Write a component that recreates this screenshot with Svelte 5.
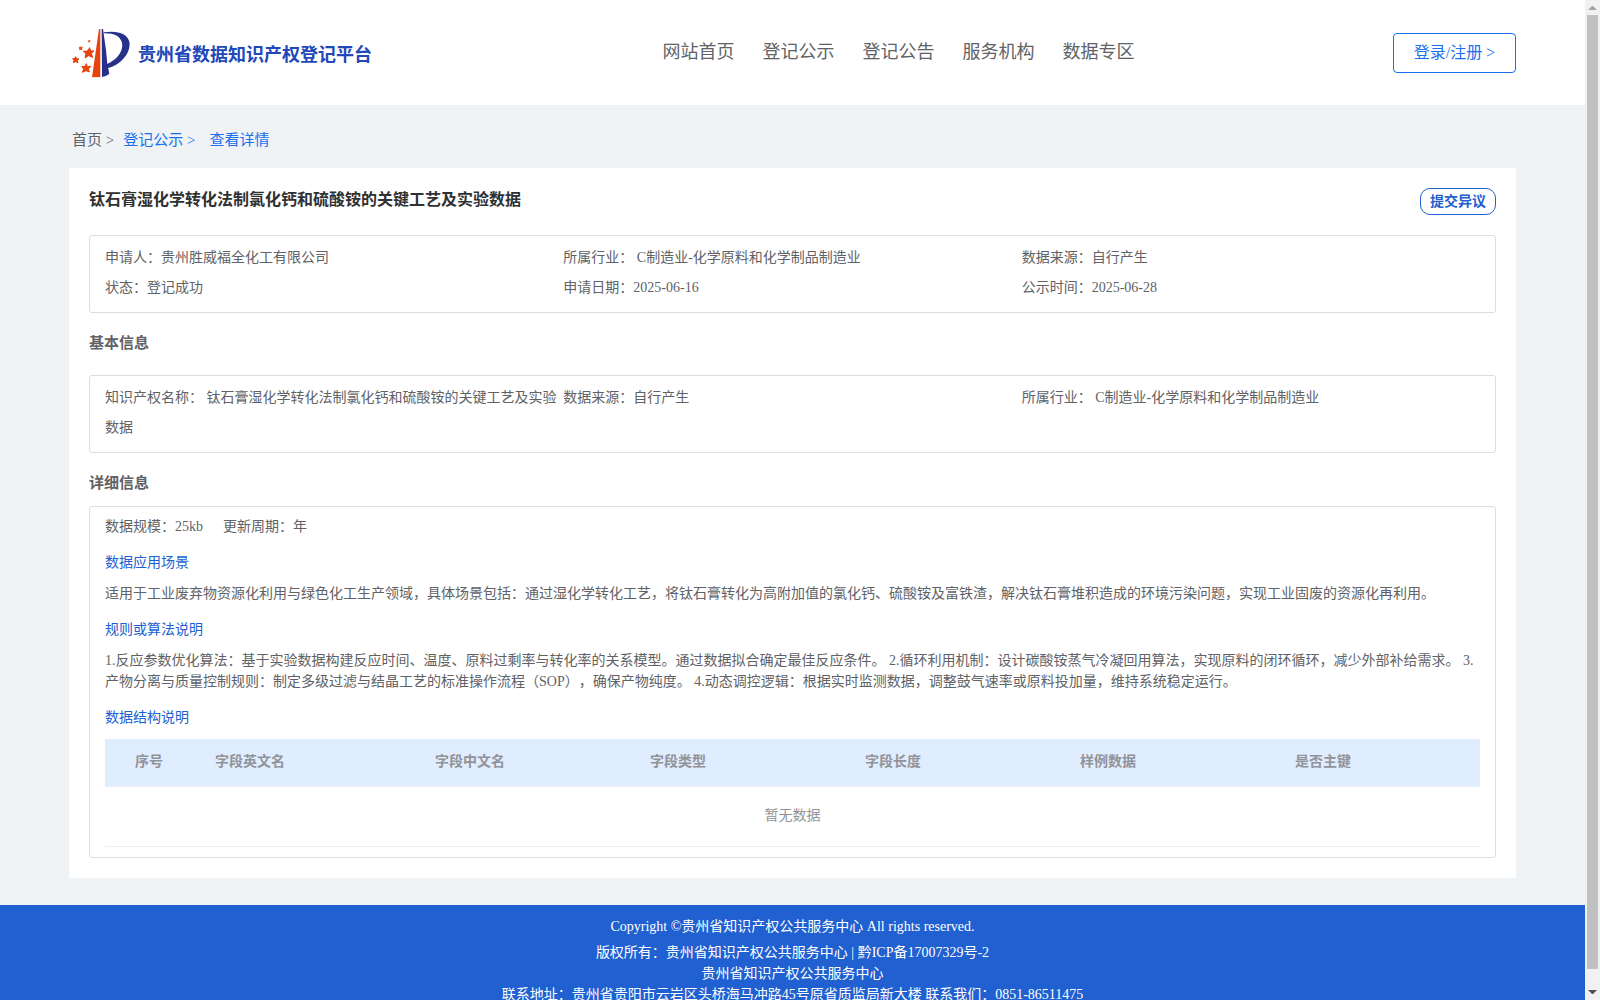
<script>
  const nav = ['网站首页', '登记公示', '登记公告', '服务机构', '数据专区'];
  const summary = [
    '申请人：贵州胜威福全化工有限公司',
    '所属行业： C制造业-化学原料和化学制品制造业',
    '数据来源：自行产生',
    '状态：登记成功',
    '申请日期：2025-06-16',
    '公示时间：2025-06-28',
  ];
  const basic = [
    '知识产权名称： 钛石膏湿化学转化法制氯化钙和硫酸铵的关键工艺及实验数据',
    '数据来源：自行产生',
    '所属行业： C制造业-化学原料和化学制品制造业',
  ];
  const columns = ['序号', '字段英文名', '字段中文名', '字段类型', '字段长度', '样例数据', '是否主键'];
</script>

<div class="window">
  <div class="page">
    <header>
      <a class="brand" href="#home">
        <svg viewBox="66 84 174 150" width="58" height="50" aria-hidden="true">
          <path fill="#e8430f" d="M147 87h4v144l-25 1z" />
          <path fill="#27308a" d="M155 87h4l9 64 4 40 6 30-9 6-13 4z" />
          <path fill="#27308a" d="M161 97c42-7 71 4 77 28 6 30-21 68-66 80l-2-12c32-14 51-41 46-65-5-20-26-29-55-28z" />
          <g fill="#e8430f" stroke="#e8430f" stroke-width="3" stroke-linejoin="round">
            <path d="M119 143l3 10 10 0-8 7 4 12-12-5-11 7 3-13-8-7 12-1z" />
            <path d="M109 191l3 9 11-1-8 8 3 9-10-4-11 5 4-10-6-7 10-1z" />
            <path d="M77 170l3 6 7 1-5 5 2 6-7-3-7 3 2-7-4-5 7-1z" />
            <path d="M91 141l2 2 4-1-2 3 1 4-4-1-3 1v-4l-1-3z" />
            <path stroke-width="2" d="M117 121l1 1 3 0-2 2 1 2-3-1-2 1v-3z" />
          </g>
        </svg>
        <span>贵州省数据知识产权登记平台</span>
      </a>
      <nav>
        {#each nav as item}<a href="#nav">{item}</a>{/each}
      </nav>
      <button class="login" type="button">登录/注册 &gt;</button>
    </header>

    <main>
      <div class="crumbs">
        <a class="home" href="#home">首页 &gt;</a>
        <a href="#list">登记公示 &gt;</a>
        <a class="current" href="#detail">查看详情</a>
      </div>

      <article>
        <div class="title">
          <h1>钛石膏湿化学转化法制氯化钙和硫酸铵的关键工艺及实验数据</h1>
          <button class="objection" type="button">提交异议</button>
        </div>
        <div class="box facts">
          {#each summary as text}<div>{text}</div>{/each}
        </div>
        <h2>基本信息</h2>
        <div class="box facts">
          {#each basic as text}<div>{text}</div>{/each}
        </div>
        <h2 class="close">详细信息</h2>
        <div class="box detail">
          <div class="scale"><span>数据规模：25kb</span><span>更新周期：年</span></div>
          <h3>数据应用场景</h3>
          <p>适用于工业废弃物资源化利用与绿色化工生产领域，具体场景包括：通过湿化学转化工艺，将钛石膏转化为高附加值的氯化钙、硫酸铵及富铁渣，解决钛石膏堆积造成的环境污染问题，实现工业固废的资源化再利用。</p>
          <h3>规则或算法说明</h3>
          <p>1.反应参数优化算法：基于实验数据构建反应时间、温度、原料过剩率与转化率的关系模型。通过数据拟合确定最佳反应条件。 2.循环利用机制：设计碳酸铵蒸气冷凝回用算法，实现原料的闭环循环，减少外部补给需求。 3.产物分离与质量控制规则：制定多级过滤与结晶工艺的标准操作流程（SOP），确保产物纯度。 4.动态调控逻辑：根据实时监测数据，调整鼓气速率或原料投加量，维持系统稳定运行。</p>
          <h3>数据结构说明</h3>
          <table>
            <thead>
              <tr>{#each columns as name}<th scope="col">{name}</th>{/each}</tr>
            </thead>
            <tbody>
              <tr><td colspan="7">暂无数据</td></tr>
            </tbody>
          </table>
        </div>
      </article>
    </main>

    <footer>
      <p class="copyright">Copyright ©贵州省知识产权公共服务中心 All rights reserved.</p>
      <p>版权所有：贵州省知识产权公共服务中心 | 黔ICP备17007329号-2</p>
      <p>贵州省知识产权公共服务中心</p>
      <p>联系地址：贵州省贵阳市云岩区头桥海马冲路45号原省质监局新大楼 联系我们：0851-86511475</p>
    </footer>
  </div>

  <div class="scrollbar" aria-hidden="true">
    <svg width="15" height="15" viewBox="0 0 15 15"><path fill="#a3a3a3" d="M3 10l4-4h1l4 4z" /></svg>
    <div class="track"><div class="thumb"></div></div>
    <svg width="15" height="15" viewBox="0 0 15 15"><path fill="#505050" d="M3 5h9l-4 4H7z" /></svg>
  </div>
</div>

<style>
  :global(body) {
    margin: 0;
  }
  .window {
    display: flex;
    height: 100vh;
    overflow: hidden;
    background: #eff3f6;
    color: #606266;
    font-family: 'Liberation Serif', 'Noto Sans CJK SC', serif;
    font-size: 14px;
    line-height: 21px;
    text-spacing-trim: space-all;
  }
  .page {
    flex: 1;
    min-width: 0;
  }
  a {
    color: inherit;
    text-decoration: none;
  }
  button {
    background: #fff;
    font-family: inherit;
    padding: 0 0 3px;
    cursor: pointer;
  }
  h1, h2, h3, p {
    margin: 0;
  }
  header {
    display: grid;
    grid-template-columns: 14fr auto 9fr;
    align-items: center;
    height: 105px;
    padding: 0 69px;
    background: #fff;
  }
  .brand {
    display: flex;
    align-items: center;
    gap: 8px;
    padding-left: 3px;
    color: #2147b9;
    font-size: 18px;
    font-weight: bold;
  }
  .brand span {
    padding-top: 5px;
  }
  nav {
    display: flex;
    gap: 28px;
    font-size: 18px;
  }
  .login {
    justify-self: end;
    width: 123px;
    height: 40px;
    border: 1px solid #1a6fed;
    border-radius: 4px;
    color: #1a6fed;
    font-size: 16px;
  }
  main {
    padding: 0 69px 27px;
  }
  .crumbs {
    display: flex;
    align-items: center;
    gap: 9px;
    height: 63px;
    padding: 8px 3px 0;
    box-sizing: border-box;
    color: #1a6fed;
    font-size: 15px;
  }
  .crumbs .home {
    color: #606266;
  }
  .crumbs .current {
    padding-left: 5px;
  }
  article {
    padding: 20px;
    background: #fff;
  }
  .title {
    display: flex;
    justify-content: space-between;
    align-items: flex-start;
    height: 47px;
  }
  h1 {
    color: #303133;
    font-size: 16px;
    line-height: 24px;
  }
  .objection {
    width: 76px;
    height: 27px;
    border: 1px solid #2060d0;
    border-radius: 10px;
    color: #2060d0;
    font-size: 14px;
    font-weight: bold;
  }
  .box {
    border: 1px solid #dddddf;
    border-radius: 3px;
    padding: 7px 15px 9px;
  }
  .facts {
    display: grid;
    grid-template-columns: repeat(3, 1fr);
    line-height: 30px;
  }
  h2 {
    height: 62px;
    font-size: 15px;
    line-height: 61px;
  }
  h2.close {
    height: 53px;
  }
  .detail {
    padding: 9px 15px 10px;
  }
  .scale {
    display: flex;
    gap: 20px;
  }
  h3 {
    margin: 15px 0 10px;
    color: #2060d0;
    font-size: 14px;
    font-weight: normal;
  }
  table {
    width: 100%;
    margin-top: 11px;
    table-layout: fixed;
    border-collapse: collapse;
    color: #909399;
  }
  th {
    height: 44px;
    padding: 0 0 3px 10px;
    border-bottom: 1px solid #ebeef5;
    background: #e0edff;
    text-align: left;
    width: 205px;
  }
  th:first-child {
    width: 70px;
    padding-left: 30px;
  }
  th:nth-child(2) {
    width: 210px;
  }
  th:last-child {
    width: auto;
  }
  td {
    height: 56px;
    padding: 0 0 3px;
    border-bottom: 1px solid #ebeef5;
    text-align: center;
  }
  footer {
    padding: 11px 0 10px;
    background: #2060d0;
    color: #fff;
    text-align: center;
  }
  .copyright {
    margin-bottom: 5px;
  }
  .scrollbar {
    display: flex;
    flex-direction: column;
    width: 15px;
    background: #f1f1f1;
  }
  .scrollbar svg {
    display: block;
  }
  .track {
    display: grid;
    grid-template-rows: 60fr 1fr;
    flex: 1;
    padding: 0 2px;
  }
  .thumb {
    background: #c1c1c1;
  }
</style>
